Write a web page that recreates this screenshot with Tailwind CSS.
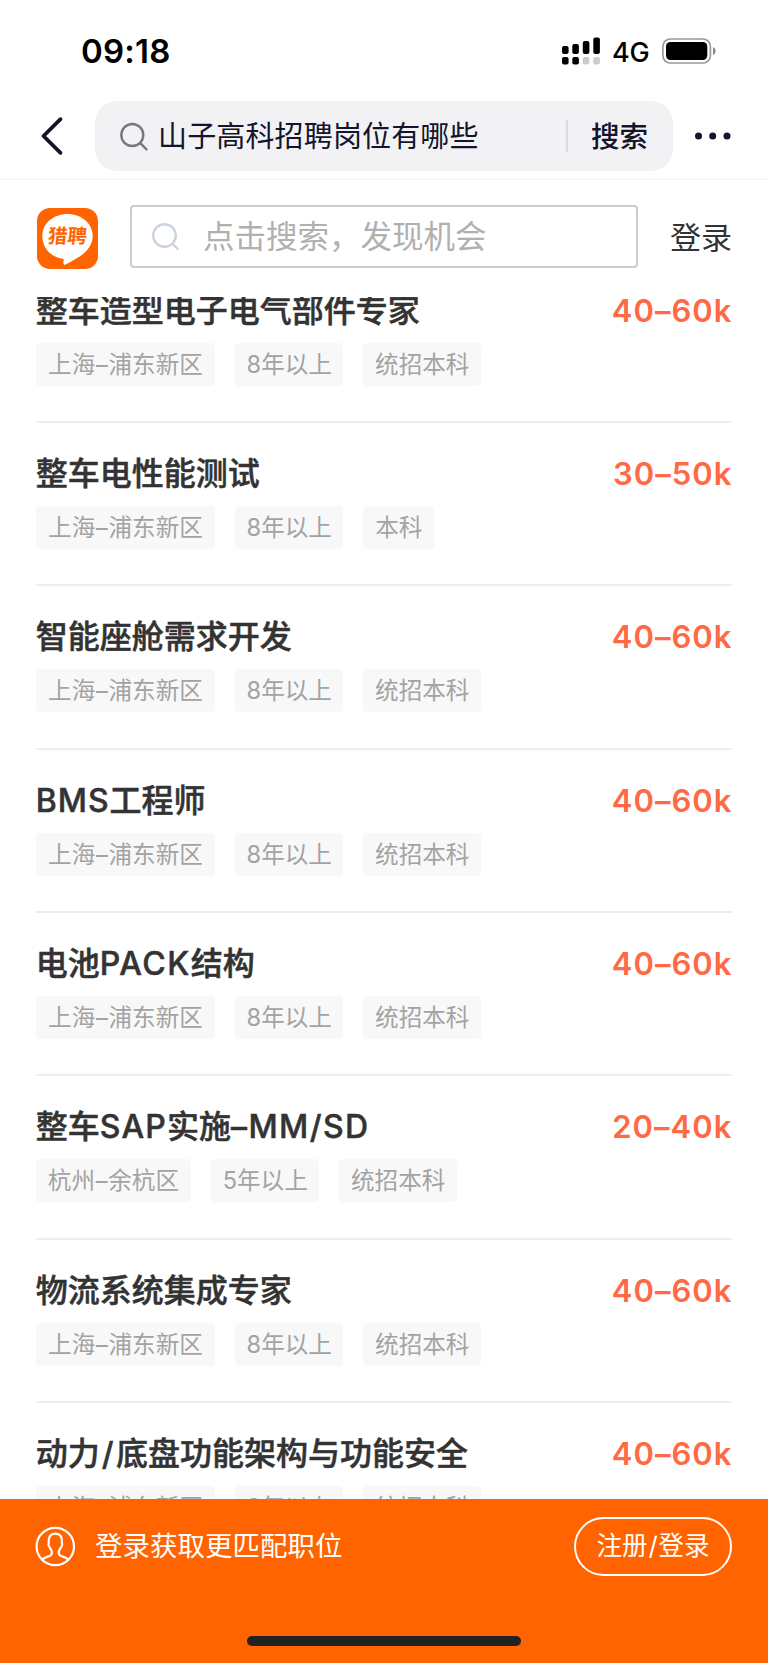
<!DOCTYPE html>
<html lang="zh-CN">
<head>
<meta charset="utf-8">
<title>猎聘</title>
<script src="https://cdn.jsdelivr.net/npm/@tailwindcss/browser@4"></script>
</head>
<body class="w-[768px] h-[1663px] flex flex-col overflow-hidden bg-white font-['Inter','Noto_Sans_CJK_SC',sans-serif]">

<!-- status bar -->
<div class="h-[101px] shrink-0 flex items-start justify-between pl-[81px] pr-[52px] pt-[31px] text-black">
  <div class="h-10 leading-10 text-[33px] font-semibold tracking-[0.2px]">09:18</div>
  <div class="h-10 flex items-center">
    <svg class="w-[39px] h-[28px]" viewBox="0 0 39 28">
      <g fill="#000"><rect x="0" y="9" width="6.600" height="8" rx="2"/><rect x="10.300" y="7" width="6.600" height="10" rx="2"/><rect x="20.800" y="4" width="6.600" height="13" rx="2"/><rect x="31.300" y="0.500" width="6.600" height="16.500" rx="2"/><rect x="0" y="20" width="6.600" height="7.600" rx="2"/><rect x="10.300" y="20" width="6.600" height="7.600" rx="2"/></g>
      <g fill="#ccc"><rect x="20.800" y="20" width="6.600" height="7.600" rx="2"/><rect x="31.300" y="20" width="6.600" height="7.600" rx="2"/></g>
    </svg>
    <span class="ml-[11px] w-[38px] text-[27px] leading-10 font-medium tracking-[-0.3px] pt-[3px]">4G</span>
    <svg class="ml-[12px] w-[54px] h-[26px]" viewBox="0 0 54 26">
      <rect x="0.900" y="1" width="47.500" height="24" rx="7.500" fill="none" stroke="#999" stroke-width="1.700"/>
      <rect x="4" y="4" width="41.300" height="18" rx="4.500" fill="#000"/>
      <path d="M51 9v8c3.400-1.300 3.400-6.700 0-8z" fill="#888"/>
    </svg>
  </div>
</div>

<!-- browser search bar -->
<div class="h-[79px] shrink-0 flex items-start border-b-2 border-[#f7f7f8] text-[#14142a]">
  <svg class="ml-[40px] mt-[15px] w-[24px] h-[40px]" viewBox="0 0 24 40" fill="none" stroke="#14142a" stroke-width="3.800" stroke-linecap="round" stroke-linejoin="round"><path d="M20.500 3.200 3.500 20l17 16.800"/></svg>
  <div class="ml-[31px] w-[578px] h-[70px] rounded-[22px] bg-[#f2f2f5] flex items-center">
    <svg class="ml-[25px] w-[29px] h-[29px]" viewBox="0 0 29 29" fill="none" stroke="#77777f" stroke-width="2.400" stroke-linecap="round"><circle cx="12.300" cy="13" r="11"/><path d="m20.500 21.300 6 6"/></svg>
    <span class="ml-[9px] mt-[2px] w-[319px] whitespace-nowrap text-[29px] tracking-[0.15px] leading-10">山子高科招聘岗位有哪些</span>
    <span class="ml-[89px] w-[2px] h-8 bg-[#dadade]"></span>
    <span class="ml-[23px] mt-[2px] whitespace-nowrap text-[28.500px] leading-10 font-medium">搜索</span>
  </div>
  <svg class="ml-[21px] mt-[30px] w-[38px] h-[10px]" viewBox="0 0 38 10" fill="#14142a"><circle cx="4.500" cy="5" r="3.500"/><circle cx="18.700" cy="5" r="3.500"/><circle cx="33" cy="5" r="3.500"/></svg>
</div>

<!-- site header -->
<div class="h-[117px] shrink-0 flex items-start pl-[37px] pt-[25px]">
  <div class="relative mt-[3px] w-[61px] h-[61px]">
    <svg class="w-full h-full" viewBox="0 0 61 61"><rect width="61" height="61" rx="13" fill="#ff6400"/><path d="M30.500 6C44.500 6 55.700 15.500 55.700 28c0 9-5.700 15.500-12.700 20.200-4.800 3.200-10 6-14.500 8.200-1.200.6-2.300.1-2.100-1.200l.3-4.200C14 49.500 5.300 40 5.300 28 5.300 15.500 16.500 6 30.500 6z" fill="#fff"/></svg>
    <span class="absolute left-[11px] top-[16px] whitespace-nowrap text-[19.500px] leading-[24px] font-bold text-[#ff6400] -skew-x-6">猎聘</span>
  </div>
  <div class="ml-[32px] w-[508px] h-[63px] rounded-[4px] border-2 border-[#ccc] flex items-center">
    <svg class="ml-[20px] w-[28px] h-[28px]" viewBox="0 0 28 28" fill="none" stroke="#cbd3de" stroke-width="2.400"><circle cx="12.500" cy="12.500" r="11.300"/><path d="m20.300 20.500 6 6"/></svg>
    <span class="ml-[23px] whitespace-nowrap text-[31.500px] leading-10 text-[#b0b0b0]">点击搜索，发现机会</span>
  </div>
  <span class="ml-[32px] mt-[13px] whitespace-nowrap text-[31px] leading-10 text-[#333]">登录</span>
</div>

<!-- job list -->
<div class="h-[1201.500px] shrink-0 overflow-hidden px-[35.700px]">
  <div class="-mt-[37.300px] flex flex-col">

    <div class="h-[163.340px] shrink-0 border-b-2 border-[#eee] pt-[31px]">
      <div class="h-10 flex justify-between leading-10 whitespace-nowrap"><span class="text-[32px] font-medium text-[#333] [-webkit-text-stroke:0.5px_#333]">整车造型电子电气部件专家</span><span class="text-[31px] font-semibold tracking-[1px] text-[#ff6a45]">40–60k</span></div>
      <div class="mt-[12px] flex gap-5 text-[23.600px] leading-[43px] text-center text-[#a3a3a3] whitespace-nowrap"><span class="w-[179.600px] rounded-[4px] bg-[#f8f8f8]">上海<span class="mx-[0.700px]">–</span>浦东新区</span><span class="w-[108px] rounded-[4px] bg-[#f8f8f8]">8年以上</span><span class="w-[118px] rounded-[4px] bg-[#f8f8f8]">统招本科</span></div>
    </div>

    <div class="h-[163.340px] shrink-0 border-b-2 border-[#eee] pt-[31px]">
      <div class="h-10 flex justify-between leading-10 whitespace-nowrap"><span class="text-[32px] font-medium text-[#333] [-webkit-text-stroke:0.5px_#333]">整车电性能测试</span><span class="text-[31px] font-semibold tracking-[1px] text-[#ff6a45]">30–50k</span></div>
      <div class="mt-[12px] flex gap-5 text-[23.600px] leading-[43px] text-center text-[#a3a3a3] whitespace-nowrap"><span class="w-[179.600px] rounded-[4px] bg-[#f8f8f8]">上海<span class="mx-[0.700px]">–</span>浦东新区</span><span class="w-[108px] rounded-[4px] bg-[#f8f8f8]">8年以上</span><span class="w-[71px] rounded-[4px] bg-[#f8f8f8]">本科</span></div>
    </div>

    <div class="h-[163.340px] shrink-0 border-b-2 border-[#eee] pt-[31px]">
      <div class="h-10 flex justify-between leading-10 whitespace-nowrap"><span class="text-[32px] font-medium text-[#333] [-webkit-text-stroke:0.5px_#333]">智能座舱需求开发</span><span class="text-[31px] font-semibold tracking-[1px] text-[#ff6a45]">40–60k</span></div>
      <div class="mt-[12px] flex gap-5 text-[23.600px] leading-[43px] text-center text-[#a3a3a3] whitespace-nowrap"><span class="w-[179.600px] rounded-[4px] bg-[#f8f8f8]">上海<span class="mx-[0.700px]">–</span>浦东新区</span><span class="w-[108px] rounded-[4px] bg-[#f8f8f8]">8年以上</span><span class="w-[118px] rounded-[4px] bg-[#f8f8f8]">统招本科</span></div>
    </div>

    <div class="h-[163.340px] shrink-0 border-b-2 border-[#eee] pt-[31px]">
      <div class="h-10 flex justify-between leading-10 whitespace-nowrap"><span class="text-[32px] font-medium text-[#333] [-webkit-text-stroke:0.5px_#333]"><span class="tracking-[1px]">BMS</span>工程师</span><span class="text-[31px] font-semibold tracking-[1px] text-[#ff6a45]">40–60k</span></div>
      <div class="mt-[12px] flex gap-5 text-[23.600px] leading-[43px] text-center text-[#a3a3a3] whitespace-nowrap"><span class="w-[179.600px] rounded-[4px] bg-[#f8f8f8]">上海<span class="mx-[0.700px]">–</span>浦东新区</span><span class="w-[108px] rounded-[4px] bg-[#f8f8f8]">8年以上</span><span class="w-[118px] rounded-[4px] bg-[#f8f8f8]">统招本科</span></div>
    </div>

    <div class="h-[163.340px] shrink-0 border-b-2 border-[#eee] pt-[31px]">
      <div class="h-10 flex justify-between leading-10 whitespace-nowrap"><span class="text-[32px] font-medium text-[#333] [-webkit-text-stroke:0.5px_#333]">电池<span class="tracking-[1.500px]">PACK</span>结构</span><span class="text-[31px] font-semibold tracking-[1px] text-[#ff6a45]">40–60k</span></div>
      <div class="mt-[12px] flex gap-5 text-[23.600px] leading-[43px] text-center text-[#a3a3a3] whitespace-nowrap"><span class="w-[179.600px] rounded-[4px] bg-[#f8f8f8]">上海<span class="mx-[0.700px]">–</span>浦东新区</span><span class="w-[108px] rounded-[4px] bg-[#f8f8f8]">8年以上</span><span class="w-[118px] rounded-[4px] bg-[#f8f8f8]">统招本科</span></div>
    </div>

    <div class="h-[163.340px] shrink-0 border-b-2 border-[#eee] pt-[31px]">
      <div class="h-10 flex justify-between leading-10 whitespace-nowrap"><span class="text-[32px] font-medium text-[#333] [-webkit-text-stroke:0.5px_#333]">整车<span class="tracking-[1.200px]">SAP</span>实施<span class="tracking-[1.400px]">–MM/SD</span></span><span class="text-[31px] font-semibold tracking-[1px] text-[#ff6a45]">20–40k</span></div>
      <div class="mt-[12px] flex gap-5 text-[23.600px] leading-[43px] text-center text-[#a3a3a3] whitespace-nowrap"><span class="w-[155.500px] rounded-[4px] bg-[#f8f8f8]">杭州<span class="mx-[0.700px]">–</span>余杭区</span><span class="w-[108px] rounded-[4px] bg-[#f8f8f8]">5年以上</span><span class="w-[118px] rounded-[4px] bg-[#f8f8f8]">统招本科</span></div>
    </div>

    <div class="h-[163.340px] shrink-0 border-b-2 border-[#eee] pt-[31px]">
      <div class="h-10 flex justify-between leading-10 whitespace-nowrap"><span class="text-[32px] font-medium text-[#333] [-webkit-text-stroke:0.5px_#333]">物流系统集成专家</span><span class="text-[31px] font-semibold tracking-[1px] text-[#ff6a45]">40–60k</span></div>
      <div class="mt-[12px] flex gap-5 text-[23.600px] leading-[43px] text-center text-[#a3a3a3] whitespace-nowrap"><span class="w-[179.600px] rounded-[4px] bg-[#f8f8f8]">上海<span class="mx-[0.700px]">–</span>浦东新区</span><span class="w-[108px] rounded-[4px] bg-[#f8f8f8]">8年以上</span><span class="w-[118px] rounded-[4px] bg-[#f8f8f8]">统招本科</span></div>
    </div>

    <div class="h-[163.340px] shrink-0 pt-[31px]">
      <div class="h-10 flex justify-between leading-10 whitespace-nowrap"><span class="text-[32px] font-medium text-[#333] [-webkit-text-stroke:0.5px_#333]">动力<span class="ml-[2px] mr-[2.500px]">/</span>底盘功能架构与功能安全</span><span class="text-[31px] font-semibold tracking-[1px] text-[#ff6a45]">40–60k</span></div>
      <div class="mt-[12px] flex gap-5 text-[23.600px] leading-[43px] text-center text-[#a3a3a3] whitespace-nowrap"><span class="w-[179.600px] rounded-[4px] bg-[#f8f8f8]">上海<span class="mx-[0.700px]">–</span>浦东新区</span><span class="w-[108px] rounded-[4px] bg-[#f8f8f8]">8年以上</span><span class="w-[118px] rounded-[4px] bg-[#f8f8f8]">统招本科</span></div>
    </div>

  </div>
</div>

<!-- login banner -->
<div class="h-[164.500px] shrink-0 bg-[#ff6400] flex flex-col items-center text-white">
  <div class="w-full h-[96.500px] pl-[35px] pr-[36px] flex items-center">
    <svg class="w-[41px] h-[41px]" viewBox="0 0 41 41" fill="none" stroke="#fff" stroke-width="2.200" stroke-linejoin="round"><circle cx="20.300" cy="20.500" r="18.700"/><path d="M7 34c2.500-2.800 5-3 7.500-4 2.300-1 2.600-2.700 2.300-4.500-.2-1.200-1.300-2.200-1.800-3.700-.4-1-1.400-1.300-1.500-2.800-.1-1.200.3-1.600.2-2.900C13.500 10.500 15.500 7.600 20.300 7.600s6.800 2.900 6.600 8.500c-.1 1.300.3 1.700.2 2.900-.1 1.500-1.100 1.800-1.500 2.800-.5 1.500-1.600 2.500-1.800 3.700-.3 1.800 0 3.500 2.300 4.500 2.500 1 5 1.200 7.500 4"/></svg>
    <span class="ml-[19px] mt-[-2px] flex-1 whitespace-nowrap text-[27.500px] leading-10">登录获取更匹配职位</span>
    <span class="w-[158px] h-[59px] mt-[-1px] rounded-full border-2 border-white text-center whitespace-nowrap text-[25.600px] leading-[54px]">注册<span class="mx-[0.700px]">/</span>登录</span>
  </div>
  <div class="mt-[41px] w-[274px] h-[10px] rounded-full bg-[#222]"></div>
</div>
</body>
</html>
